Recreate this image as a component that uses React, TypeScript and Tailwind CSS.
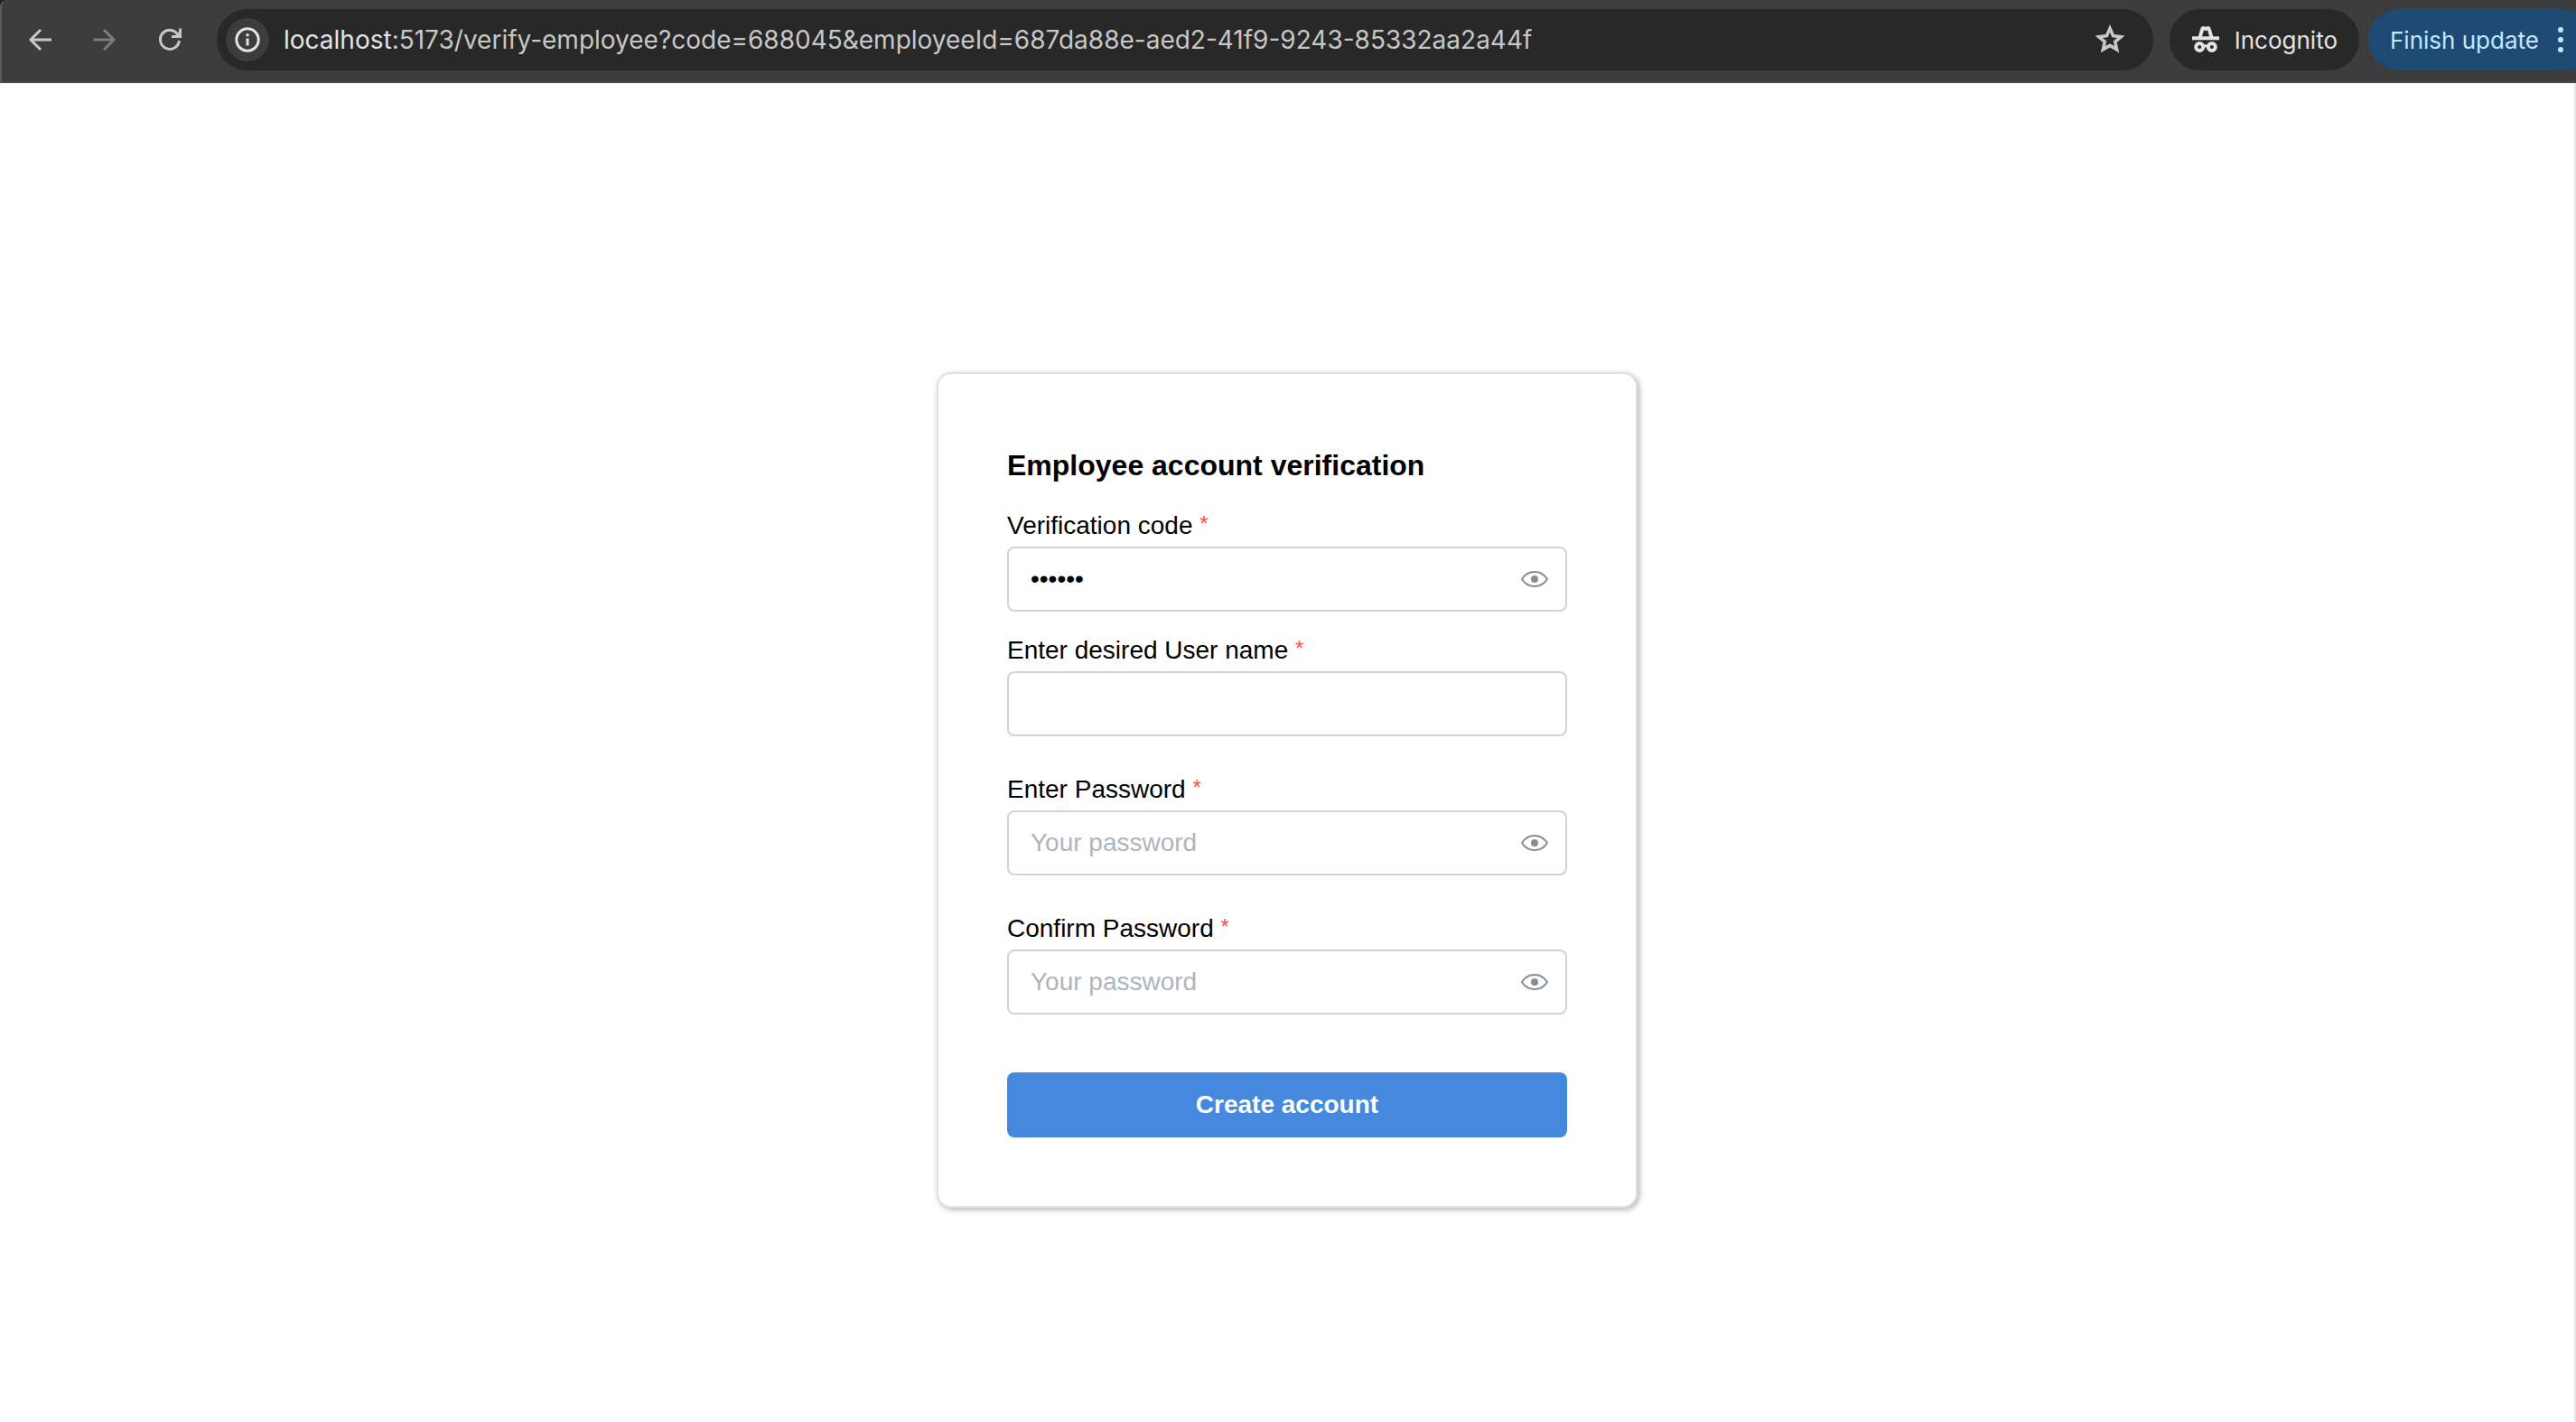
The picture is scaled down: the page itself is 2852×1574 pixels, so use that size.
import { useState } from "react";
import type { InputHTMLAttributes } from "react";

function BackIcon() {
  return (
    <svg viewBox="0 0 32 32" className="size-8" fill="none" stroke="currentColor" strokeWidth="3">
      <path d="M29 16H6M17 5 6 16l11 11" />
    </svg>
  );
}

function ForwardIcon() {
  return (
    <svg viewBox="0 0 32 32" className="size-8" fill="none" stroke="currentColor" strokeWidth="3">
      <path d="M3.5 16H26M15 5l11 11-11 11" />
    </svg>
  );
}

function ReloadIcon() {
  return (
    <svg viewBox="0 0 32 32" className="size-8" fill="none" stroke="currentColor" strokeWidth="3">
      <path d="M26.4 17A10.5 10.5 0 1 1 25 10.500" />
      <path d="M27.500 3.500V12.500H18" />
      <path d="M22 11.500 26.500 7v5Z" fill="currentColor" stroke="none" />
    </svg>
  );
}

function InfoIcon() {
  return (
    <svg viewBox="0 0 32 32" className="size-8" fill="none" stroke="currentColor" strokeWidth="3">
      <circle cx="16" cy="16" r="12.200" />
      <path d="M16 14.500V22.500M16 9.200V12.200" />
    </svg>
  );
}

function StarIcon() {
  return (
    <svg viewBox="0 0 40 40" className="size-10" fill="currentColor" fillRule="evenodd">
      <path d="M20 3 24.800 14 36.500 15.400 27.700 23 30.300 34.500 20 28.400 9.700 34.500 12.300 23 3.500 15.400 15.200 14ZM20 12 17.700 17.300 12 17.900 16.300 21.600 15 27.100 20 24.200 25 27.100 23.700 21.600 28 17.900 22.300 17.300Z" />
    </svg>
  );
}

function IncognitoIcon() {
  return (
    <svg viewBox="0 0 32 32" className="size-8" fill="none" stroke="currentColor" strokeWidth="4">
      <path d="M9.500 13.500 12 5Q12.600 2.600 14 3.200L16 4 18 3.200Q19.400 2.600 20 5L22.500 13.500" />
      <path d="M1 14.300H31" />
      <circle cx="9.200" cy="24" r="4" />
      <circle cx="22.800" cy="24" r="4" />
      <path d="M13 23.500Q16 22 19 23.500" strokeWidth="3" />
    </svg>
  );
}

function EyeIcon() {
  return (
    <svg viewBox="0 0 15 15" className="size-[30px]" fill="currentColor" fillRule="evenodd">
      <path d="M7.500 11C4.803 11 2.530 9.622 1.096 7.500 2.530 5.378 4.803 4 7.500 4s4.970 1.378 6.404 3.500C12.470 9.622 10.197 11 7.500 11Zm0-8C4.308 3 1.656 4.706.076 7.235a.5.5 0 0 0 0 .53C1.656 10.294 4.308 12 7.500 12s5.844-1.706 7.424-4.235a.5.5 0 0 0 0-.53C13.344 4.706 10.692 3 7.500 3Zm0 6.500a2 2 0 1 0 0-4 2 2 0 0 0 0 4Z" />
    </svg>
  );
}

function BrowserBar() {
  return (
    <div className="bg-[#1c201e]">
      <header className="flex h-[92px] items-center rounded-tl-lg border-b-2 border-l-2 border-b-[#4a4849] border-l-[#5c5c5c] bg-[#3c3c3c] font-[Inter,sans-serif] text-[#c7c7c7]">
        <nav className="mb-0.5 flex flex-none items-center gap-10 pr-9 pl-[26px]">
          <button type="button" aria-label="Back"><BackIcon /></button>
          <button type="button" aria-label="Forward" className="text-[#7d7d7d]"><ForwardIcon /></button>
          <button type="button" aria-label="Reload"><ReloadIcon /></button>
        </nav>
        <div className="mb-0.5 flex h-[68px] min-w-0 flex-1 items-center rounded-full bg-[#282828] pr-7 pl-2.5">
          <button type="button" aria-label="Site information" className="flex size-12 flex-none items-center justify-center rounded-full bg-[#3c3c3c] text-[#e3e3e3]">
            <InfoIcon />
          </button>
          <p className="ml-4 flex-1 truncate text-[28px] leading-10">
            <span className="text-[#e3e3e3]">localhost</span>
            :5173/verify-employee?code=688045&amp;employeeId=687da88e-aed2-41f9-9243-85332aa2a44f
          </p>
          <button type="button" aria-label="Bookmark this tab"><StarIcon /></button>
        </div>
        <button type="button" className="mb-0.5 ml-[18px] flex h-[68px] flex-none items-center gap-4 rounded-full bg-[#282828] px-6 text-[26px] text-[#e3e3e3]">
          <IncognitoIcon />
          Incognito
        </button>
        <div className="mb-0.5 ml-2.5 h-[68px] w-[230px] flex-none overflow-hidden">
          <button type="button" className="flex h-[68px] w-[250px] items-center rounded-full bg-[#1f4a73] pl-6 text-[26px] text-[#c2e7ff]">
            Finish update
            <svg viewBox="0 0 8 32" className="ml-5 h-8 w-2" fill="currentColor">
              <circle cx="4" cy="5" r="3" />
              <circle cx="4" cy="16" r="3" />
              <circle cx="4" cy="27" r="3" />
            </svg>
          </button>
        </div>
      </header>
    </div>
  );
}

type FieldProps = InputHTMLAttributes<HTMLInputElement> & { id: string; label: string };

function Field({ id, label, type, ...rest }: FieldProps) {
  const [visible, setVisible] = useState(false);
  const secret = type === "password";
  return (
    <div>
      <label htmlFor={id} className="mb-[3px] block h-10 text-[28px] leading-10">
        {label} <span aria-hidden="true" className="align-top text-2xl leading-9 text-[#fa5252]">*</span>
      </label>
      <div className="relative">
        <input
          id={id}
          type={secret && visible ? "text" : type}
          required
          className="block h-[72px] w-full rounded-lg border-2 border-[#ced4da] bg-white px-6 text-[28px] text-black outline-none placeholder:text-[#adb5bd] focus:border-[#228be6]"
          {...rest}
        />
        {secret && (
          <button
            type="button"
            aria-label={`Toggle visibility of ${label}`}
            onClick={() => setVisible(!visible)}
            className="absolute inset-y-0 right-0 flex w-[72px] items-center justify-center text-[#868e96]"
          >
            <EyeIcon />
          </button>
        )}
      </div>
    </div>
  );
}

export default function App() {
  return (
    <div className="flex min-h-screen flex-col bg-white text-black">
      <BrowserBar />
      <main className="flex flex-1 items-center justify-center border-r-2 border-[#e8e8e8] pt-[82px] font-['Liberation_Sans',Arial,sans-serif]">
        <form
          onSubmit={(event) => event.preventDefault()}
          className="w-full max-w-[776px] rounded-2xl border-2 border-[#dee2e6] bg-white p-[76px] shadow-[2px_2px_6px_rgba(0,0,0,0.3)]"
        >
          <h1 className="text-[32px] leading-[50px] font-bold">Employee account verification</h1>
          <div className="mt-[22px] flex flex-col gap-[39px]">
            <div className="flex flex-col gap-[23px]">
              <Field id="code" label="Verification code" type="password" defaultValue="688045" />
              <Field id="username" label="Enter desired User name" type="text" />
            </div>
            <Field id="password" label="Enter Password" type="password" placeholder="Your password" />
            <Field id="confirm" label="Confirm Password" type="password" placeholder="Your password" />
          </div>
          <button type="submit" className="mt-16 h-[72px] w-full rounded-lg bg-[#4589df] text-[28px] font-bold text-white">
            Create account
          </button>
        </form>
      </main>
    </div>
  );
}
